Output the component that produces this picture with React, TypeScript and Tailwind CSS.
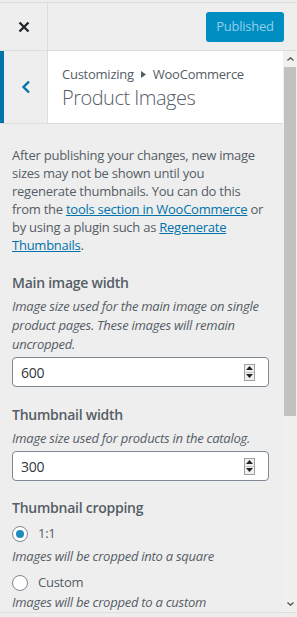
import React from 'react';

const font = { fontFamily: '"Open Sans", "Noto Sans", sans-serif' };

function Spinner() {
  return (
    <div className="flex flex-col w-[11px] h-[17px] border border-[#a0a0a0] bg-[#f0f0f0]">
      <div className="flex-1 flex items-center justify-center border-b border-[#c8c8c8]">
        <svg width="7" height="4" viewBox="0 0 7 4"><path d="M3.5 0 L7 4 L0 4 Z" fill="#222" /></svg>
      </div>
      <div className="flex-1 flex items-center justify-center">
        <svg width="7" height="4" viewBox="0 0 7 4"><path d="M0 0 L7 0 L3.5 4 Z" fill="#222" /></svg>
      </div>
    </div>
  );
}

function NumberField({ value }: { value: string }) {
  return (
    <div className="flex items-center justify-between h-[30px] w-[257px] bg-white border border-[#7e8993] rounded-[4px] pl-[8px] pr-[13px] text-[14px] text-[#32373c]">
      <span>{value}</span>
      <Spinner />
    </div>
  );
}

function Radio({ checked, label }: { checked: boolean; label: string }) {
  return (
    <div className="flex items-center gap-[10px] h-[20px]">
      <div className="w-[16px] h-[16px] rounded-full border border-[#7e8993] bg-white flex items-center justify-center">
        {checked && <div className="w-[8px] h-[8px] rounded-full bg-[#1e8cbe]" />}
      </div>
      <span className="text-[13px] text-[#555d66]">{label}</span>
    </div>
  );
}

export default function App() {
  return (
    <div className="w-[297px] h-[617px] bg-[#eee] flex flex-col overflow-hidden tracking-[-0.25px]" style={font}>
      {/* Top header */}
      <div className="h-[49px] shrink-0 flex items-stretch border-t border-[#ddd] border-b mt-[2px] bg-[#eee]">
        <div className="w-[48px] flex items-center justify-center border-r border-[#ddd]">
          <svg width="12" height="12" viewBox="0 0 12 12">
            <path d="M1.5 1.5 L10.5 10.5 M10.5 1.5 L1.5 10.5" stroke="#23282d" strokeWidth="2.4" />
          </svg>
        </div>
        <div className="flex-1 flex items-center justify-end pr-[13px]">
          <div className="h-[30px] w-[78px] rounded-[3px] bg-[#008ec2] flex items-center justify-center text-[13px] text-[#8fd0ea]">
            Published
          </div>
        </div>
      </div>

      <div className="flex-1 flex min-h-0">
        <div className="flex-1 flex flex-col min-w-0 overflow-hidden">
          {/* Section header */}
          <div className="h-[73px] shrink-0 flex border-b border-[#ddd] bg-white">
            <div className="w-[48px] flex items-center justify-center bg-[#eee] border-l-4 border-[#0073aa] border-r border-r-[#ddd]">
              <svg width="10" height="14" viewBox="0 0 10 14">
                <path d="M8 1.5 L2.5 7 L8 12.5" stroke="#0073aa" strokeWidth="2.4" fill="none" />
              </svg>
            </div>
            <div className="flex-1 pl-[14px] pt-[14px]">
              <div className="text-[13px] leading-[18px] text-[#555d66] flex items-center gap-[7px]">
                <span>Customizing</span>
                <svg width="5" height="7" viewBox="0 0 5 7"><path d="M0 0 L5 3.5 L0 7 Z" fill="#555d66" /></svg>
                <span>WooCommerce</span>
              </div>
              <div className="text-[20px] leading-[28px] text-[#555d66] font-light mt-[1px] tracking-[-0.5px]">Product Images</div>
            </div>
          </div>

          {/* Content */}
          <div className="flex-1 px-[12px] pt-[22px] text-[#555d66]">
            <p className="text-[13px] leading-[18px]">
              After publishing your changes, new image sizes may not be shown until you regenerate thumbnails. You can do this from the{' '}
              <span className="text-[#0073aa] underline">tools section in WooCommerce</span> or by using a plugin such as{' '}
              <span className="text-[#0073aa] underline">Regenerate Thumbnails</span>.
            </p>

            <div className="mt-[19px] text-[14px] leading-[20px] font-semibold">Main image width</div>
            <p className="mt-[4px] text-[13px] leading-[19px] italic">
              Image size used for the main image on single product pages. These images will remain uncropped.
            </p>
            <div className="mt-[3px]"><NumberField value="600" /></div>

            <div className="mt-[18px] text-[14px] leading-[20px] font-semibold">Thumbnail width</div>
            <p className="mt-[4px] text-[13px] leading-[19px] italic">Image size used for products in the catalog.</p>
            <div className="mt-[3px]"><NumberField value="300" /></div>

            <div className="mt-[17px] text-[14px] leading-[20px] font-semibold">Thumbnail cropping</div>
            <div className="mt-[6px]"><Radio checked label="1:1" /></div>
            <p className="mt-[3px] text-[13px] leading-[19px] italic">Images will be cropped into a square</p>
            <div className="mt-[7px]"><Radio checked={false} label="Custom" /></div>
            <p className="mt-0 text-[13px] leading-[18px] italic">Images will be cropped to a custom</p>
          </div>
        </div>

        {/* Scrollbar */}
        <div className="w-[14px] shrink-0 bg-[#f0f0f0] flex flex-col">
          <div className="h-[16px] flex items-center justify-center">
            <svg width="7" height="4" viewBox="0 0 7 4"><path d="M0.5 3.5 L3.5 0.8 L6.5 3.5" stroke="#505050" strokeWidth="1.3" fill="none" /></svg>
          </div>
          <div className="h-[349px] mx-[1px] bg-[#c1c1c1]" />
          <div className="flex-1" />
          <div className="h-[16px] flex items-center justify-center">
            <svg width="7" height="4" viewBox="0 0 7 4"><path d="M0.5 0.5 L3.5 3.2 L6.5 0.5" stroke="#505050" strokeWidth="1.3" fill="none" /></svg>
          </div>
        </div>
      </div>

      <div className="h-[5px] shrink-0 border-t border-[#ddd] bg-[#eee]" />
    </div>
  );
}
